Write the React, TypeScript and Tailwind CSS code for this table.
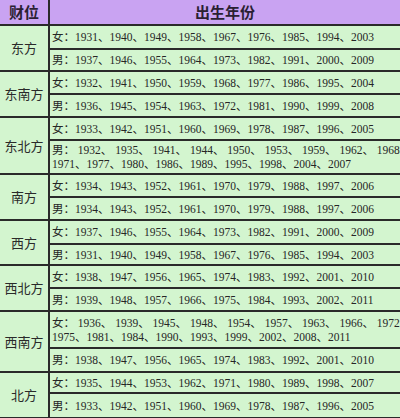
import React from "react";

type Row = { lines: string[]; h: number };
type Group = { name: string; rows: Row[] };

const groups: Group[] = [
  {
    name: "东方",
    rows: [
      { lines: ["女：1931、1940、1949、1958、1967、1976、1985、1994、2003"], h: 24 },
      { lines: ["男：1937、1946、1955、1964、1973、1982、1991、2000、2009"], h: 22 },
    ],
  },
  {
    name: "东南方",
    rows: [
      { lines: ["女：1932、1941、1950、1959、1968、1977、1986、1995、2004"], h: 23 },
      { lines: ["男：1936、1945、1954、1963、1972、1981、1990、1999、2008"], h: 23 },
    ],
  },
  {
    name: "东北方",
    rows: [
      { lines: ["女：1933、1942、1951、1960、1969、1978、1987、1996、2005"], h: 23 },
      {
        lines: [
          "男： 1932、 1935、 1941、 1944、 1950、 1953、 1959、 1962、 1968、",
          "1971、1977、1980、1986、1989、1995、1998、2004、2007",
        ],
        h: 34,
      },
    ],
  },
  {
    name: "南方",
    rows: [
      { lines: ["女：1934、1943、1952、1961、1970、1979、1988、1997、2006"], h: 23 },
      { lines: ["男：1934、1943、1952、1961、1970、1979、1988、1997、2006"], h: 23 },
    ],
  },
  {
    name: "西方",
    rows: [
      { lines: ["女：1937、1946、1955、1964、1973、1982、1991、2000、2009"], h: 24 },
      { lines: ["男：1931、1940、1949、1958、1967、1976、1985、1994、2003"], h: 21 },
    ],
  },
  {
    name: "西北方",
    rows: [
      { lines: ["女：1938、1947、1956、1965、1974、1983、1992、2001、2010"], h: 23 },
      { lines: ["男：1939、1948、1957、1966、1975、1984、1993、2002、2011"], h: 23 },
    ],
  },
  {
    name: "西南方",
    rows: [
      {
        lines: [
          "女： 1936、 1939、 1945、 1948、 1954、 1957、 1963、 1966、 1972、",
          "1975、1981、1984、1990、1993、1999、2002、2008、2011",
        ],
        h: 37,
      },
      { lines: ["男：1938、1947、1956、1965、1974、1983、1992、2001、2010"], h: 24 },
    ],
  },
  {
    name: "北方",
    rows: [
      { lines: ["女：1935、1944、1953、1962、1971、1980、1989、1998、2007"], h: 21 },
      { lines: ["男：1933、1942、1951、1960、1969、1978、1987、1996、2005"], h: 25 },
    ],
  },
];

const bodyFont = {
  fontFamily: '"Liberation Serif", "Noto Sans CJK SC", serif',
};
const cjkFont = {
  fontFamily: '"Noto Sans CJK SC", "Noto Sans", sans-serif',
};

export default function App() {
  return (
    <div className="w-[400px] h-[418px] overflow-hidden bg-[#d3f5cf]">
      <div className="flex h-[26px] bg-[#c9a3f2] border-b-2 border-[#2a2a2a]">
        <div
          className="w-[50px] shrink-0 border-r-2 border-[#2a2a2a] flex items-center justify-center text-[15px] font-bold text-[#2a1f33]"
          style={cjkFont}
        >
          财位
        </div>
        <div
          className="flex-1 flex items-center justify-center text-[15px] font-bold text-[#2a1f33]"
          style={cjkFont}
        >
          出生年份
        </div>
      </div>
      {groups.map((g) => (
        <div key={g.name} className="flex">
          <div
            className="w-[50px] shrink-0 border-r-2 border-b-2 border-[#2a2a2a] flex items-center justify-center text-[13px] text-[#2a2a2a]"
            style={cjkFont}
          >
            {g.name}
          </div>
          <div className="flex-1 min-w-0 flex flex-col">
            {g.rows.map((r, i) => (
              <div
                key={i}
                className="border-b-2 border-[#2a2a2a] flex flex-col justify-center pl-[2px] overflow-hidden whitespace-pre text-[11.5px] leading-[14px] text-[#262626]"
                style={{ ...bodyFont, height: r.h }}
              >
                {r.lines.map((l, j) => (
                  <div key={j}>{l}</div>
                ))}
              </div>
            ))}
          </div>
        </div>
      ))}
    </div>
  );
}
